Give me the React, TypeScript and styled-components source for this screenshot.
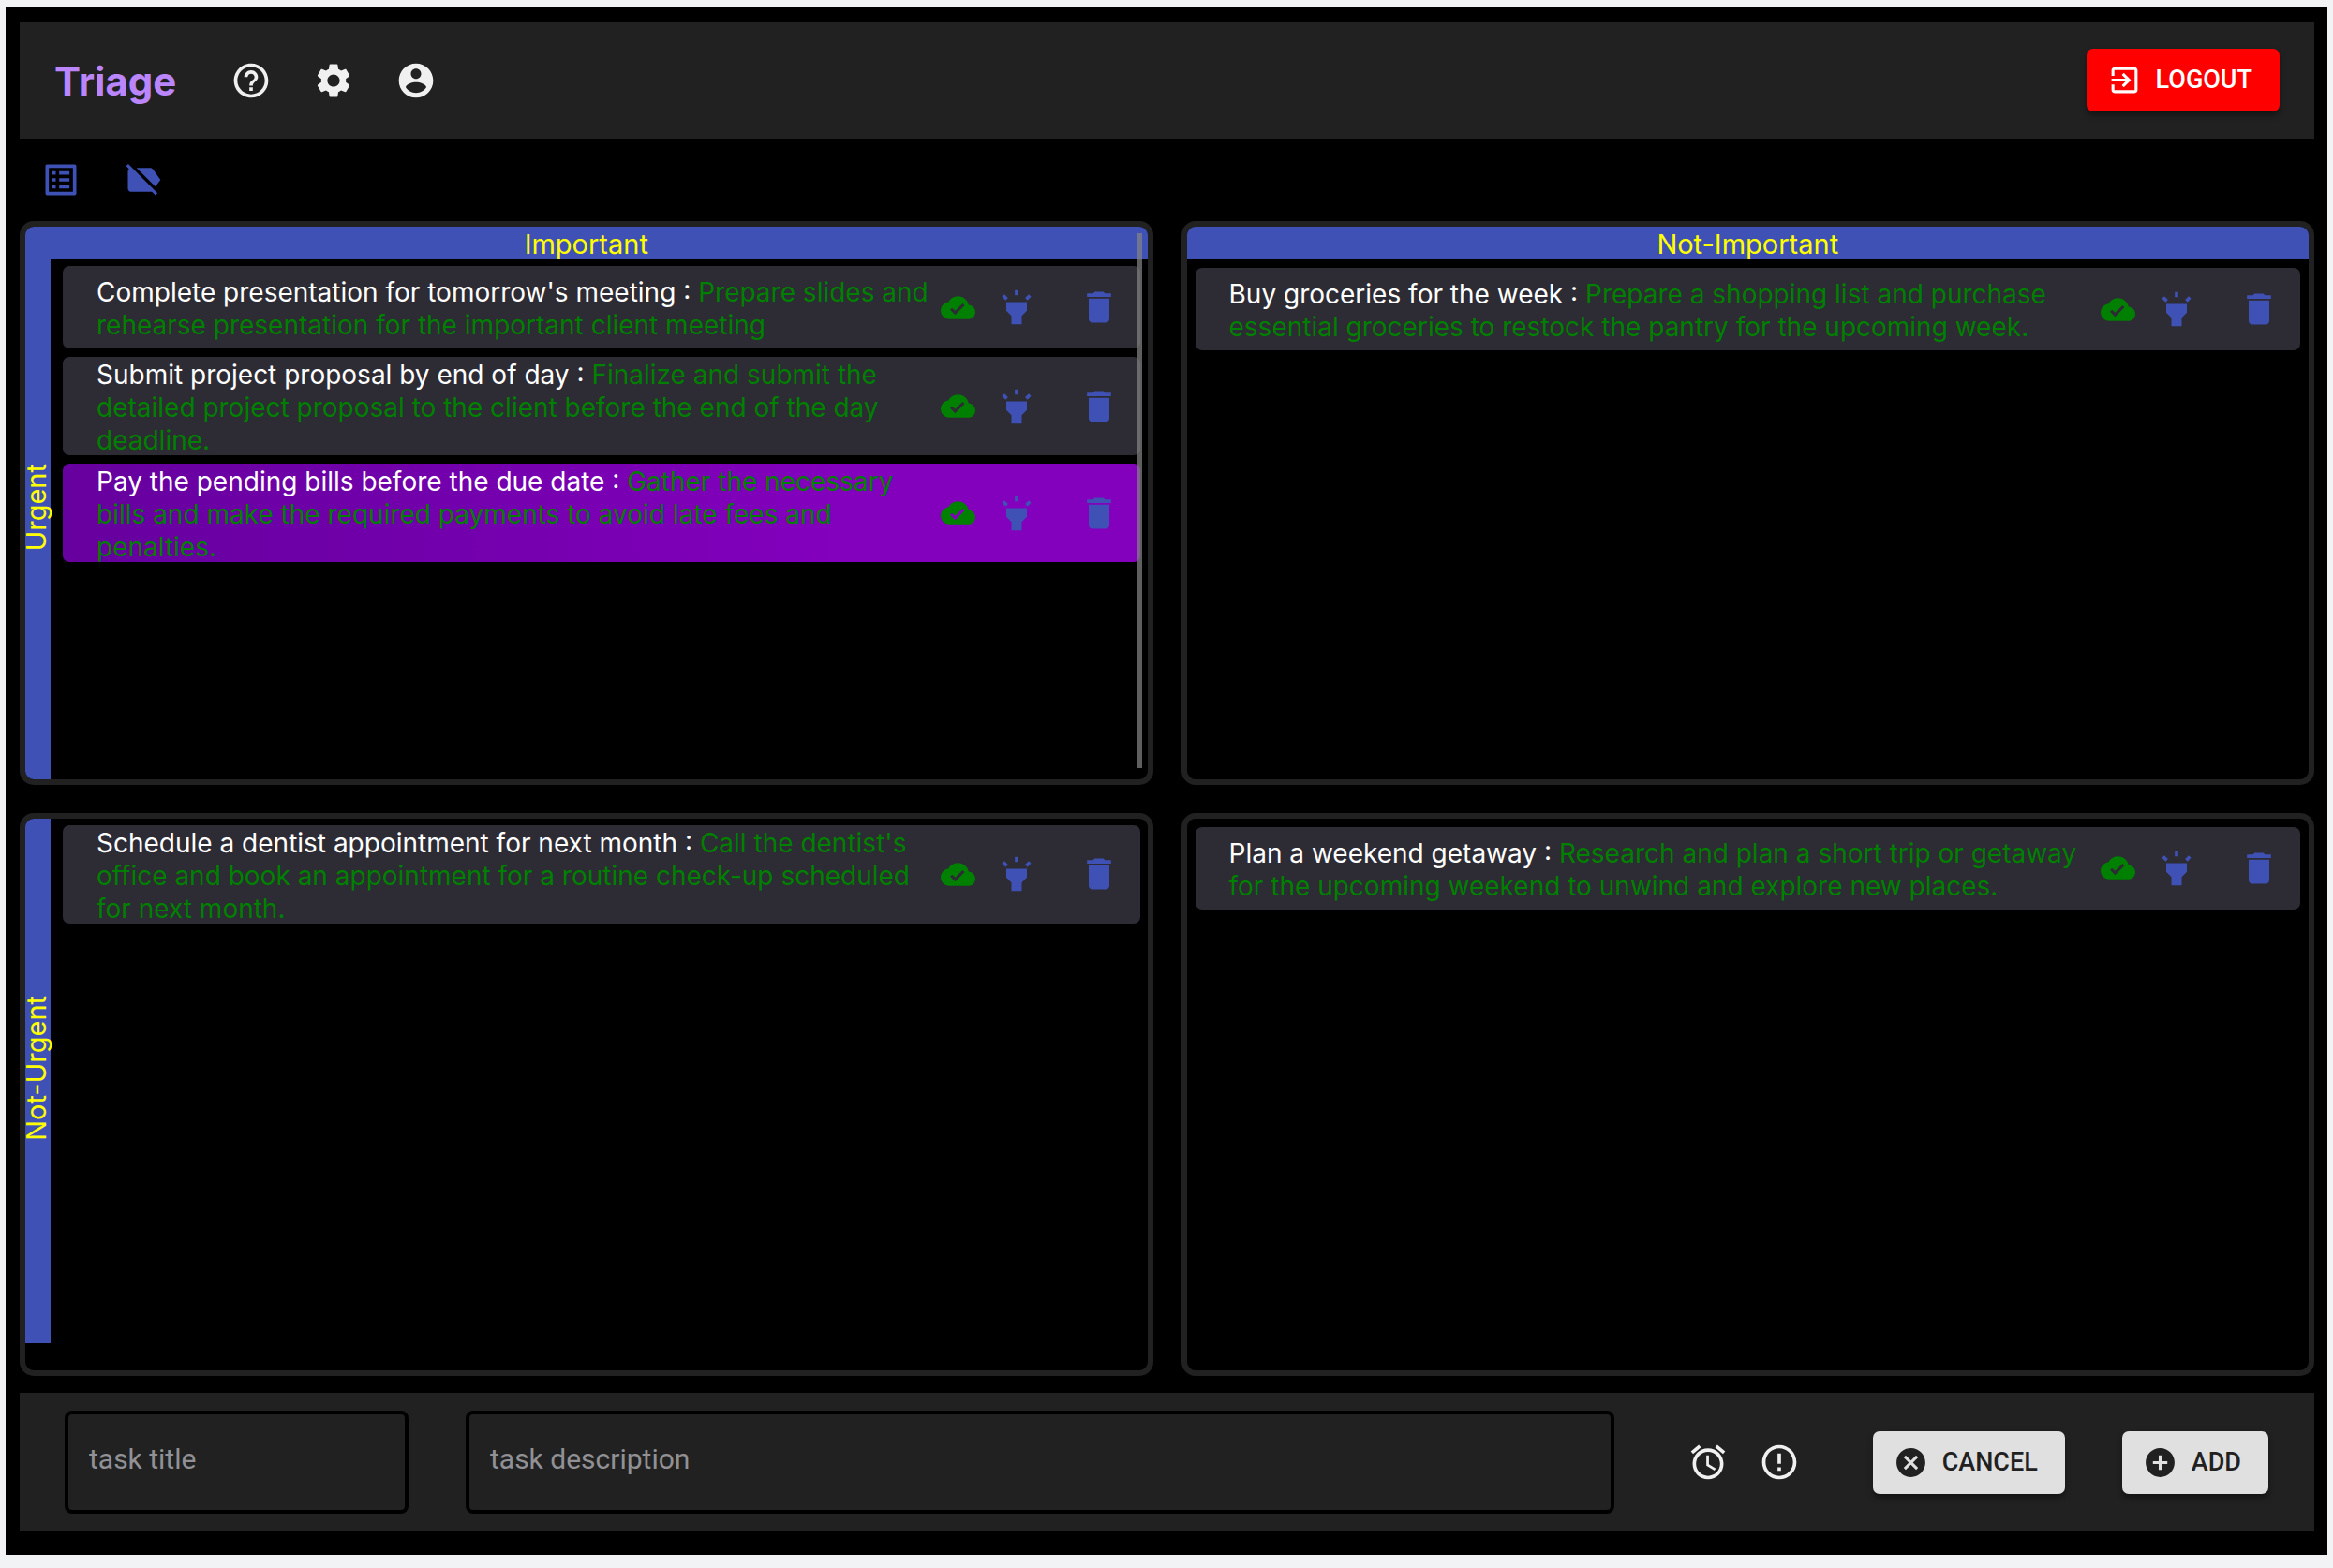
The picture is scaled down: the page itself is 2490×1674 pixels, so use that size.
import React from "react";
import styled, { createGlobalStyle, css } from "styled-components";

const ui = `Inter, "Liberation Sans", sans-serif`;
const roboto = `Roboto, "Liberation Sans", sans-serif`;

const GlobalStyle = createGlobalStyle`
  *, *::before, *::after { box-sizing: border-box; }
  body {
    margin: 0;
    min-height: 100vh;
    display: flex;
    flex-direction: column;
    padding: 8px 6px 14px;
    background: #f1f3f5;
    font-family: ${ui};
    font-size: 28px;
    line-height: 35px;
  }
  #root { flex: 1; display: flex; flex-direction: column; }
`;

const Shell = styled.div`
  flex: 1;
  display: flex;
  flex-direction: column;
  padding: 15px 14px 25px 15px;
  background: #000;
  box-shadow: 0 -1px 0 #c8c8c8;
`;

const Header = styled.header`
  display: flex;
  align-items: center;
  height: 125px;
  padding: 0 37px;
  background: #212121;
`;

const Brand = styled.h1`
  margin: 0 36px 0 0;
  padding-top: 2px;
  color: #bb86fc;
  font-size: 42px;
  line-height: 50px;
  font-weight: 700;
`;

const Svg = styled.svg<{ $size: number }>`
  display: block;
  flex: none;
  width: ${(p) => p.$size}px;
  height: ${(p) => p.$size}px;
  fill: currentColor;
`;

const IconButton = styled.button<{ $tone?: "light" | "brand"; $compact?: boolean }>`
  flex: none;
  display: flex;
  padding: ${(p) => (p.$compact ? "16px" : "22px")};
  border: 0;
  border-radius: 50%;
  background: none;
  color: ${(p) => (p.$tone === "brand" ? "#3f51b5" : "#f0f0f0")};
  cursor: pointer;
`;

const Button = styled.button<{ $danger?: boolean }>`
  flex: none;
  display: flex;
  align-items: center;
  gap: 15px;
  height: 67px;
  padding: 0 29px 0 22px;
  border: 0;
  border-radius: 7px;
  background: ${(p) => (p.$danger ? "#ff0000" : "#e0e0e0")};
  color: ${(p) => (p.$danger ? "#fff" : "#212121")};
  box-shadow: 0 4px 6px rgba(0, 0, 0, 0.4);
  font: 500 27px/45px ${roboto};
  text-transform: uppercase;
  cursor: pointer;
`;

const Spacer = styled.div`
  flex: 1;
`;

const Toolbar = styled.nav`
  display: flex;
`;

const Matrix = styled.main`
  flex: 1;
  display: grid;
  grid-template-columns: 1fr 1fr;
  grid-template-rows: 1fr 1fr;
  gap: 30px;
  margin-bottom: 18px;
`;

const Quadrant = styled.section`
  position: relative;
  display: flex;
  flex-direction: column;
  min-width: 0;
  overflow: hidden;
  border: 6px solid #212121;
  border-radius: 15px;
`;

const ColumnLabel = styled.h2`
  margin: 0;
  padding-top: 2px;
  background: #3f51b5;
  color: #ffff00;
  font-size: 29px;
  line-height: 33px;
  font-weight: 400;
  text-align: center;
`;

const QuadrantBody = styled.div`
  flex: 1;
  display: flex;
  align-items: flex-start;
`;

const RowLabel = styled.h2<{ $short?: boolean }>`
  flex: none;
  display: flex;
  align-items: center;
  justify-content: center;
  width: 27px;
  height: ${(p) => (p.$short ? "95%" : "100%")};
  margin: 0;
  padding: 0 4px 26px 0;
  background: #3f51b5;
  color: #ffff00;
  font-size: 29px;
  line-height: 27px;
  font-weight: 400;

  span {
    writing-mode: vertical-rl;
    transform: rotate(180deg);
  }
`;

const TaskList = styled.ul<{ $beside?: boolean }>`
  flex: 1;
  min-width: 0;
  display: flex;
  flex-direction: column;
  gap: 9px;
  margin: 0;
  padding: ${(p) => (p.$beside ? "7px 8px 7px 13px" : "9px")};
  list-style: none;
`;

const Card = styled.li<{ $active?: boolean }>`
  display: flex;
  align-items: center;
  min-height: 88px;
  padding-left: 36px;
  border-radius: 7px;
  background: #2d2b34;
  ${(p) =>
    p.$active &&
    css`
      background: linear-gradient(to right, #66009e, #7200ac 35%, #8300bd 72%);
    `}
`;

const TaskText = styled.p`
  flex: 1;
  min-width: 0;
  margin: 2px 0 -2px;
  color: #fff;

  span { color: #008000; }
`;

const Synced = styled.span`
  flex: none;
  color: #008000;
`;

const ScrollThumb = styled.div`
  position: absolute;
  top: 7px;
  right: 6px;
  bottom: 12px;
  width: 6px;
  background: rgba(132, 132, 132, 0.72);
`;

const Composer = styled.form`
  display: flex;
  align-items: center;
  height: 148px;
  padding: 0 49px 0 48px;
  background: #212121;
`;

const Field = styled.input<{ $grow?: boolean }>`
  ${(p) => (p.$grow ? "flex: 1;" : "flex: none; width: 367px;")}
  min-width: 0;
  height: 110px;
  padding: 0 22px 8px;
  border: 4px solid #000;
  border-radius: 8px;
  background: transparent;
  color: #fff;
  font: 400 30px/35px ${roboto};

  &::placeholder { color: #919195; opacity: 1; }
`;

const Fields = styled.div`
  flex: 1;
  display: flex;
  gap: 61px;
`;

const Flags = styled.div`
  display: flex;
  margin: 0 62px;
`;

const Actions = styled.div`
  display: flex;
  gap: 61px;
`;

const paths = {
  help: "M11 18h2v-2h-2v2zm1-16C6.48 2 2 6.48 2 12s4.48 10 10 10 10-4.48 10-10S17.52 2 12 2zm0 18c-4.41 0-8-3.59-8-8s3.59-8 8-8 8 3.59 8 8-3.59 8-8 8zm0-14c-2.21 0-4 1.79-4 4h2c0-1.1.9-2 2-2s2 .9 2 2c0 2-3 1.75-3 5h2c0-2.25 3-2.5 3-5 0-2.21-1.79-4-4-4z",
  settings: "M19.14 12.94c.04-.3.06-.61.06-.94 0-.32-.02-.64-.07-.94l2.03-1.58c.18-.14.23-.41.12-.61l-1.92-3.32c-.12-.22-.37-.29-.59-.22l-2.39.96c-.5-.38-1.03-.7-1.62-.94l-.36-2.54c-.04-.24-.24-.41-.48-.41h-3.84c-.24 0-.43.17-.47.41l-.36 2.54c-.59.24-1.13.57-1.62.94l-2.39-.96c-.22-.08-.47 0-.59.22L2.74 8.87c-.12.21-.08.47.12.61l2.03 1.58c-.05.3-.09.63-.09.94s.02.64.07.94l-2.03 1.58c-.18.14-.23.41-.12.61l1.92 3.32c.12.22.37.29.59.22l2.39-.96c.5.38 1.03.7 1.62.94l.36 2.54c.05.24.24.41.48.41h3.84c.24 0 .44-.17.47-.41l.36-2.54c.59-.24 1.13-.56 1.62-.94l2.39.96c.22.08.47 0 .59-.22l1.92-3.32c.12-.22.07-.47-.12-.61l-2.01-1.58zM12 15.6c-1.98 0-3.6-1.62-3.6-3.6s1.62-3.6 3.6-3.6 3.6 1.62 3.6 3.6-1.62 3.6-3.6 3.6z",
  account: "M12 2C6.48 2 2 6.48 2 12s4.48 10 10 10 10-4.48 10-10S17.52 2 12 2zm0 3c1.66 0 3 1.34 3 3s-1.34 3-3 3-3-1.34-3-3 1.34-3 3-3zm0 14.2c-2.5 0-4.71-1.28-6-3.22.03-1.99 4-3.08 6-3.08 1.99 0 5.97 1.09 6 3.08-1.29 1.94-3.5 3.22-6 3.22z",
  exit: "M10.09 15.59L11.5 17l5-5-5-5-1.41 1.41L12.67 11H3v2h9.67l-2.58 2.59zM19 3H5c-1.11 0-2 .9-2 2v4h2V5h14v14H5v-4H3v4c0 1.1.89 2 2 2h14c1.1 0 2-.9 2-2V5c0-1.1-.9-2-2-2z",
  list: "M19 5v14H5V5h14m1.1-2H3.9c-.5 0-.9.4-.9.9v16.2c0 .4.4.9.9.9h16.2c.4 0 .9-.5.9-.9V3.9c0-.5-.5-.9-.9-.9zM11 7h6v2h-6V7zm0 4h6v2h-6v-2zm0 4h6v2h-6zM7 7h2v2H7zm0 4h2v2H7zm0 4h2v2H7z",
  labelOff: "M3.25 2.75l17 17L19 21l-2-2H5c-1.1 0-2-.9-2-2V7c0-.55.23-1.05.59-1.41L2 4l1.25-1.25zM22 12l-4.37-6.16C17.27 5.33 16.67 5 16 5H8l11 11 3-4z",
  cloud: "M19.35 10.04C18.67 6.59 15.64 4 12 4 9.11 4 6.6 5.64 5.35 8.04 2.34 8.36 0 10.91 0 14c0 3.31 2.69 6 6 6h13c2.76 0 5-2.24 5-5 0-2.64-2.05-4.78-4.65-4.96zM10 17l-3.5-3.5 1.41-1.41L10 14.17 15.18 9l1.41 1.41L10 17z",
  highlight: "M6 14l3 3v5h6v-5l3-3V9H6zm5-12h2v3h-2zM3.5 5.88l1.41-1.41 2.12 2.12L5.62 8zm13.46.71l2.12-2.12 1.41 1.41L18.38 8z",
  trash: "M6 19c0 1.1.9 2 2 2h8c1.1 0 2-.9 2-2V7H6v12zM19 4h-3.5l-1-1h-5l-1 1H5v2h14V4z",
  alarm: "M22 5.72l-4.6-3.86-1.29 1.53 4.6 3.86L22 5.72zM7.88 3.39L6.6 1.86 2 5.71l1.29 1.53 4.59-3.85zM12.5 8H11v6l4.75 2.85.75-1.23-4-2.37V8zM12 4c-4.97 0-9 4.03-9 9s4.02 9 9 9c4.97 0 9-4.03 9-9s-4.03-9-9-9zm0 16c-3.87 0-7-3.13-7-7s3.13-7 7-7 7 3.13 7 7-3.13 7-7 7z",
  error: "M11 15h2v2h-2zm0-8h2v6h-2zm.99-5C6.47 2 2 6.48 2 12s4.47 10 9.99 10C17.52 22 22 17.52 22 12S17.52 2 11.99 2zM12 20c-4.42 0-8-3.58-8-8s3.58-8 8-8 8 3.58 8 8-3.58 8-8 8z",
  cancel: "M12 2C6.47 2 2 6.47 2 12s4.47 10 10 10 10-4.47 10-10S17.53 2 12 2zm5 13.59L15.59 17 12 13.41 8.41 17 7 15.59 10.59 12 7 8.41 8.41 7 12 10.59 15.59 7 17 8.41 13.41 12 17 15.59z",
  add: "M12 2C6.48 2 2 6.48 2 12s4.48 10 10 10 10-4.48 10-10S17.52 2 12 2zm5 11h-4v4h-2v-4H7v-2h4V7h2v4h4v2z",
};

function Icon({ name, size = 44 }: { name: keyof typeof paths; size?: number }) {
  return (
    <Svg viewBox="0 0 24 24" $size={size} aria-hidden="true">
      <path d={paths[name]} />
    </Svg>
  );
}

interface TaskProps {
  title: string;
  description: string;
  active?: boolean;
}

function Task({ title, description, active }: TaskProps) {
  return (
    <Card $active={active}>
      <TaskText>
        {title} : <span>{description}</span>
      </TaskText>
      <Synced>
        <Icon name="cloud" size={37} />
      </Synced>
      <IconButton type="button" $tone="brand" aria-label="Highlight task">
        <Icon name="highlight" />
      </IconButton>
      <IconButton type="button" $tone="brand" aria-label="Delete task">
        <Icon name="trash" />
      </IconButton>
    </Card>
  );
}

const urgentImportant: TaskProps[] = [
  {
    title: "Complete presentation for tomorrow's meeting",
    description: "Prepare slides and rehearse presentation for the important client meeting",
  },
  {
    title: "Submit project proposal by end of day",
    description:
      "Finalize and submit the detailed project proposal to the client before the end of the day deadline.",
  },
  {
    title: "Pay the pending bills before the due date",
    description:
      "Gather the necessary bills and make the required payments to avoid late fees and penalties.",
    active: true,
  },
];

export default function App() {
  return (
    <>
      <GlobalStyle />
      <Shell>
        <Header>
          <Brand>Triage</Brand>
          <IconButton type="button" aria-label="Help">
            <Icon name="help" />
          </IconButton>
          <IconButton type="button" aria-label="Settings">
            <Icon name="settings" />
          </IconButton>
          <IconButton type="button" aria-label="Account">
            <Icon name="account" />
          </IconButton>
          <Spacer />
          <Button type="button" $danger>
            <Icon name="exit" size={37} />
            Logout
          </Button>
        </Header>

        <Toolbar>
          <IconButton type="button" $tone="brand" aria-label="List view">
            <Icon name="list" />
          </IconButton>
          <IconButton type="button" $tone="brand" aria-label="Hide labels">
            <Icon name="labelOff" />
          </IconButton>
        </Toolbar>

        <Matrix>
          <Quadrant>
            <ColumnLabel>Important</ColumnLabel>
            <QuadrantBody>
              <RowLabel>
                <span>Urgent</span>
              </RowLabel>
              <TaskList $beside>
                {urgentImportant.map((task) => (
                  <Task key={task.title} {...task} />
                ))}
              </TaskList>
            </QuadrantBody>
            <ScrollThumb />
          </Quadrant>

          <Quadrant>
            <ColumnLabel>Not-Important</ColumnLabel>
            <QuadrantBody>
              <TaskList>
                <Task
                  title="Buy groceries for the week"
                  description="Prepare a shopping list and purchase essential groceries to restock the pantry for the upcoming week."
                />
              </TaskList>
            </QuadrantBody>
          </Quadrant>

          <Quadrant>
            <QuadrantBody>
              <RowLabel $short>
                <span>Not-Urgent</span>
              </RowLabel>
              <TaskList $beside>
                <Task
                  title="Schedule a dentist appointment for next month"
                  description="Call the dentist's office and book an appointment for a routine check-up scheduled for next month."
                />
              </TaskList>
            </QuadrantBody>
          </Quadrant>

          <Quadrant>
            <QuadrantBody>
              <TaskList>
                <Task
                  title="Plan a weekend getaway"
                  description="Research and plan a short trip or getaway for the upcoming weekend to unwind and explore new places."
                />
              </TaskList>
            </QuadrantBody>
          </Quadrant>
        </Matrix>

        <Composer onSubmit={(event) => event.preventDefault()}>
          <Fields>
            <Field placeholder="task title" aria-label="task title" />
            <Field $grow placeholder="task description" aria-label="task description" />
          </Fields>
          <Flags>
            <IconButton type="button" $compact aria-label="Set reminder">
              <Icon name="alarm" />
            </IconButton>
            <IconButton type="button" $compact aria-label="Set priority">
              <Icon name="error" />
            </IconButton>
          </Flags>
          <Actions>
            <Button type="reset">
              <Icon name="cancel" size={37} />
              Cancel
            </Button>
            <Button type="submit">
              <Icon name="add" size={37} />
              Add
            </Button>
          </Actions>
        </Composer>
      </Shell>
    </>
  );
}
